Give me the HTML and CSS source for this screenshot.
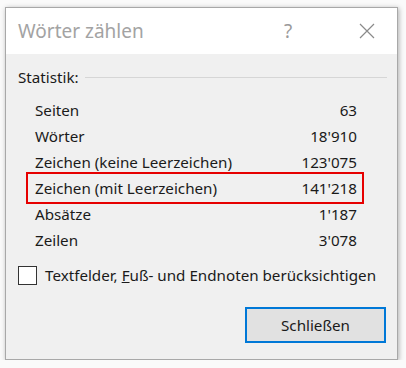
FILE: index.html
```html
<!DOCTYPE html>
<html lang="de">
<head>
    <meta charset="UTF-8">
    <title>Wörter zählen</title>
    <link rel="stylesheet" href="styles.css">
</head>
<body>

<div class="dialog">
    <div class="titlebar">
        <span class="title">Wörter zählen</span>
        <span class="help">?</span>
        <span class="close">
            <svg width="16" height="16" viewBox="0 0 16 16"><path d="M1 1L15 15M15 1L1 15" stroke="#8a8a8a" stroke-width="1.2" fill="none"/></svg>
        </span>
    </div>
    <div class="content">
        <div class="group">
            <span class="groupName">Statistik:</span>
            <span class="groupLine"></span>
        </div>
        <div class="stats">
            <div class="row"><span>Seiten</span><span>63</span></div>
            <div class="row"><span>Wörter</span><span>18'910</span></div>
            <div class="row"><span>Zeichen (keine Leerzeichen)</span><span>123'075</span></div>
            <div class="row marked"><span>Zeichen (mit Leerzeichen)</span><span>141'218</span></div>
            <div class="row"><span>Absätze</span><span>1'187</span></div>
            <div class="row"><span>Zeilen</span><span>3'078</span></div>
        </div>
        <label class="check">
            <span class="box"></span>
            <span>Textfelder, <u>F</u>uß- und Endnoten berücksichtigen</span>
        </label>
        <div class="buttons">
            <span class="btn">Schließen</span>
        </div>
    </div>
</div>

</body>
</html>
```

FILE: styles.css
```css
* {
    padding: 0;
    margin: 0;
    box-sizing: border-box;
}
body {
    background: #fafafa;
    font-family: "Noto Sans", "Liberation Sans", sans-serif;
    font-size: 15.2px;
    color: #1a1a1a;
}
.dialog {
    width: 393px;
    height: 353px;
    margin: 7px 0 0 5px;
    border: 1px solid #a8a8a8;
    background: #f0f0f0;
    box-shadow: 1px 1px 5px rgba(0, 0, 0, 0.3);
    display: flex;
    flex-direction: column;
}
.titlebar {
    height: 46px;
    background: #ffffff;
    display: flex;
    align-items: center;
    padding-left: 12px;
}
.titlebar .title {
    font-size: 19px;
    color: #a3a3a3;
    flex: 1;
}
.titlebar .help {
    font-size: 19px;
    color: #9a9a9a;
    width: 20px;
    margin-right: 55px;
}
.titlebar .close {
    display: flex;
    width: 16px;
    margin-right: 22px;
}
.content {
    padding: 12px 10px 0 12px;
    display: flex;
    flex-direction: column;
}
.group {
    display: flex;
    align-items: center;
    height: 22px;
}
.group .groupName {
    margin-right: 6px;
}
.group .groupLine {
    flex: 1;
    border-top: 1px solid #d6d6d6;
}
.stats {
    padding: 9px 0 0 14px;
    width: 346px;
}
.row {
    display: flex;
    justify-content: space-between;
    height: 26px;
    line-height: 26px;
    padding: 0 7px 0 3px;
}
.row.marked {
    border: 2px solid #e60000;
    margin-left: -6px;
    padding: 0 5px 0 7px;
    height: 32px;
    line-height: 28px;
    margin-top: -3px;
    margin-bottom: -3px;
}
.check {
    display: flex;
    align-items: center;
    margin-top: 12px;
    gap: 8px;
}
.check .box {
    width: 19px;
    height: 19px;
    border: 1px solid #333;
    background: #fff;
}
.buttons {
    display: flex;
    justify-content: flex-end;
    margin-top: 22px;
    padding-right: 1px;
}
.btn {
    width: 141px;
    height: 36px;
    border: 2px solid #0078d7;
    background: #e1e1e1;
    text-align: center;
    line-height: 32px;
}
```
